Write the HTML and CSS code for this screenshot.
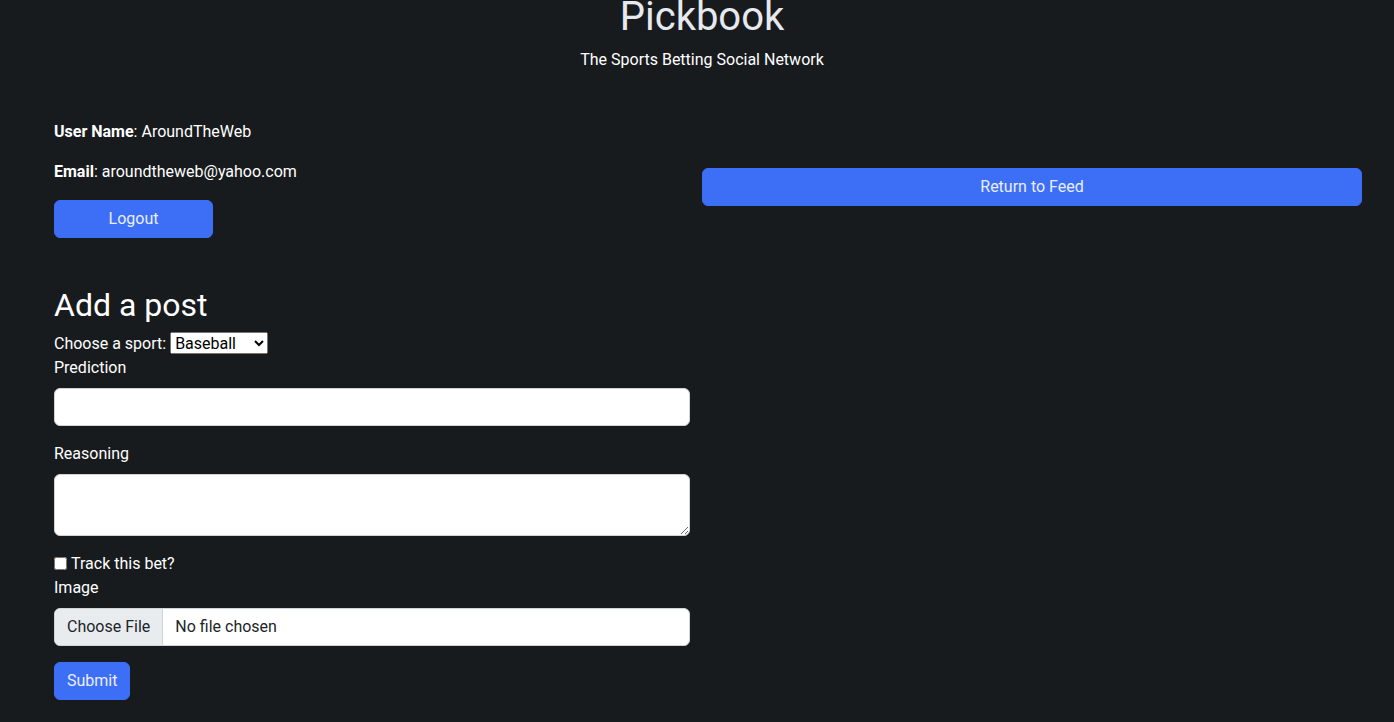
FILE: index.html
```html
<!DOCTYPE html>
<html lang="en">
<head>
<meta charset="utf-8">
<title>Pickbook</title>
<link rel="stylesheet" href="styles.css">
</head>
<body>
<div class="page">
  <header class="header">
    <h1 class="title">Pickbook</h1>
    <p class="subtitle">The Sports Betting Social Network</p>
  </header>
  <main class="main">
    <div class="row">
      <div class="col-left">
        <p class="info"><strong>User Name</strong>: AroundTheWeb</p>
        <p class="info"><strong>Email</strong>: aroundtheweb@yahoo.com</p>
        <button class="btn btn-logout" type="button">Logout</button>
      </div>
      <div class="col-right">
        <button class="btn btn-block" type="button">Return to Feed</button>
      </div>
    </div>
    <form class="post-form">
      <h2 class="form-title">Add a post</h2>
      <div class="sport-line">
        <label for="sport">Choose a sport:</label>
        <select id="sport" class="sport-select">
          <option>Baseball</option>
          <option>Basketball</option>
          <option>Football</option>
          <option>Hockey</option>
        </select>
      </div>
      <div class="field">
        <label class="form-label" for="prediction">Prediction</label>
        <input class="form-control" id="prediction" type="text">
      </div>
      <div class="field">
        <label class="form-label" for="reasoning">Reasoning</label>
        <textarea class="form-control textarea" id="reasoning" rows="2"></textarea>
      </div>
      <div class="check-line">
        <input type="checkbox" id="track" class="check">
        <label for="track">Track this bet?</label>
      </div>
      <div class="field">
        <label class="form-label" for="image">Image</label>
        <input class="form-control file" id="image" type="file">
      </div>
      <button class="btn" type="submit">Submit</button>
    </form>
  </main>
</div>
</body>
</html>
```

FILE: styles.css
```css
* { box-sizing: border-box; }

html, body {
  margin: 0;
  padding: 0;
  background: #181b1e;
  color: #ffffff;
  font-family: Roboto, "Liberation Sans", Arial, sans-serif;
  font-size: 16px;
  line-height: 1.5;
  overflow: hidden;
}

.page {
  margin-left: 42px;
  width: 1320px;
}

.header {
  text-align: center;
}

.title {
  margin: -7px 0 0;
  font-size: 40px;
  font-weight: 400;
  line-height: 1.2;
  color: #e6e9ee;
}

.subtitle {
  margin: 7px 0 0;
}

.main {
  padding-left: 12px;
  margin-top: 48px;
}

.row {
  display: flex;
  align-items: center;
  gap: 12px;
}

.col-left {
  width: 636px;
}

.col-right {
  width: 660px;
}

.info {
  margin: 0 0 16px;
}

.info strong {
  font-weight: 700;
}

.btn {
  display: inline-block;
  font-family: inherit;
  font-size: 16px;
  line-height: 1.5;
  color: #e9eefc;
  background: #3d6ef6;
  border: 1px solid #3d6ef6;
  border-radius: 6px;
  padding: 6px 12px;
  text-align: center;
  cursor: pointer;
}

.btn-logout {
  width: 159px;
  margin-bottom: 16px;
}

.btn-block {
  display: block;
  width: 100%;
}

.post-form {
  width: 636px;
  margin-top: 32px;
}

.form-title {
  margin: 0 0 8px;
  font-size: 32px;
  font-weight: 400;
  line-height: 1.2;
}

.sport-line {
  height: 24px;
  line-height: 24px;
}

.sport-select {
  font-family: inherit;
  font-size: 16px;
  width: 98px;
  height: 22px;
  vertical-align: baseline;
}

.field {
  margin-bottom: 16px;
}

.form-label {
  display: inline-block;
  margin-bottom: 8px;
}

.form-control {
  display: block;
  width: 100%;
  height: 38px;
  padding: 6px 12px;
  font-family: inherit;
  font-size: 16px;
  line-height: 1.5;
  color: #212529;
  background: #ffffff;
  border: 1px solid #ced4da;
  border-radius: 6px;
}

.textarea {
  height: 62px;
  resize: vertical;
}

.check-line {
  display: flex;
  align-items: center;
  height: 24px;
}

.check {
  width: 13px;
  height: 13px;
  margin: -2px 4px 0 0;
}

.file {
  overflow: hidden;
  padding: 4px 12px 8px;
}

.file::file-selector-button {
  font-family: inherit;
  font-size: 16px;
  color: #212529;
  background: #e9ecef;
  border: 0;
  border-right: 1px solid #ced4da;
  border-radius: 0;
  padding: 4px 12px 8px;
  margin: -4px 12px -8px -12px;
  height: 38px;
}
```
